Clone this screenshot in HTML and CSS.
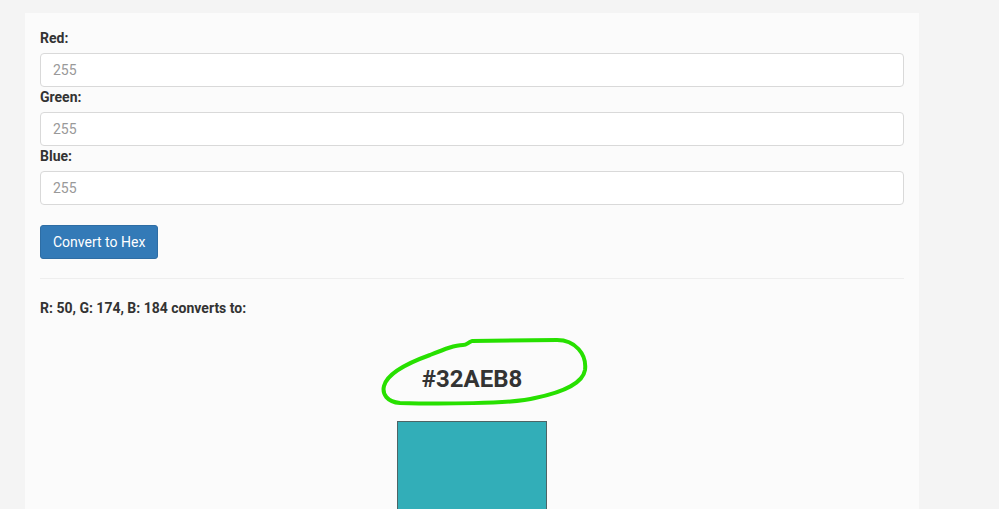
FILE: index.html
```html
<!DOCTYPE html>
<html lang="en">
<head>
    <meta charset="UTF-8">
    <meta name="viewport" content="width=device-width, initial-scale=1.0">
    <title>RGB to Hex</title>
    <link rel="stylesheet" href="styles.css">
</head>
<body>
    <div class="card">
        <form class="rgb-form">
            <div class="form-group">
                <label for="red">Red:</label>
                <input type="text" id="red" class="form-control" placeholder="255">
            </div>
            <div class="form-group">
                <label for="green">Green:</label>
                <input type="text" id="green" class="form-control" placeholder="255">
            </div>
            <div class="form-group">
                <label for="blue">Blue:</label>
                <input type="text" id="blue" class="form-control" placeholder="255">
            </div>
            <button type="button" class="btn-primary">Convert to Hex</button>
        </form>

        <hr class="divider">

        <div class="result">
            <p class="result-label">R: 50, G: 174, B: 184 converts to:</p>
            <h2 class="hex-value">#32AEB8</h2>
            <div class="swatch"></div>

            <!-- hand drawn circle round the answer -->
            <svg class="scribble" width="220" height="80" viewBox="0 0 220 80">
                <path d="M97 7 L182 6 C200 6 212 20 210 36 C208 48 190 58 160 64 C140 70 60 70 25 69 C12 68 7 60 9 52 C12 40 30 30 55 21 C70 15 80 11 88 11 C92 11 92 9 97 7 Z"
                      fill="none" stroke="#27e000" stroke-width="4" stroke-linejoin="round"/>
            </svg>
        </div>
    </div>
</body>
</html>
```

FILE: styles.css
```css
body {
    background: #f4f4f4;
    margin: 0;
    padding: 0;
    font-family: Roboto, "Liberation Sans", sans-serif;
    font-size: 14px;
    line-height: 20px;
    color: #333;
    overflow: hidden;
}

.card {
    width: 864px;
    margin: 13px 0 0 25px;
    padding: 15px;
    background: #fbfbfb;
    min-height: 600px;
    position: relative;
}

.form-group label {
    display: block;
    font-weight: bold;
    margin-bottom: 5px;
}

.form-control {
    display: block;
    box-sizing: border-box;
    width: 100%;
    height: 34px;
    padding: 6px 12px;
    font-family: inherit;
    font-size: 14px;
    color: #555;
    background: #fff;
    border: 1px solid #d9d9d9;
    border-radius: 4px;
    outline: none;
}

.form-control::placeholder {
    color: #999;
}

.btn-primary {
    margin-top: 20px;
    height: 34px;
    padding: 6px 12px;
    font-family: inherit;
    font-size: 14px;
    line-height: 20px;
    color: #fff;
    background: #337ab7;
    border: 1px solid #2e6da4;
    border-radius: 3px;
    cursor: pointer;
}

.divider {
    margin: 19px 0 19px;
    border: 0;
    border-top: 1px solid #eee;
}

.result {
    position: relative;
}

.result-label {
    margin: 0;
    font-weight: bold;
}

.hex-value {
    margin: 48px 0 0;
    font-size: 24px;
    line-height: 26px;
    font-weight: bold;
    text-align: center;
}

.swatch {
    width: 148px;
    height: 150px;
    margin: 29px auto 0;
    background: #32aeb8;
    border: 1px solid #4d6466;
}

.scribble {
    position: absolute;
    left: 335px;
    top: 36px;
    pointer-events: none;
}
```
